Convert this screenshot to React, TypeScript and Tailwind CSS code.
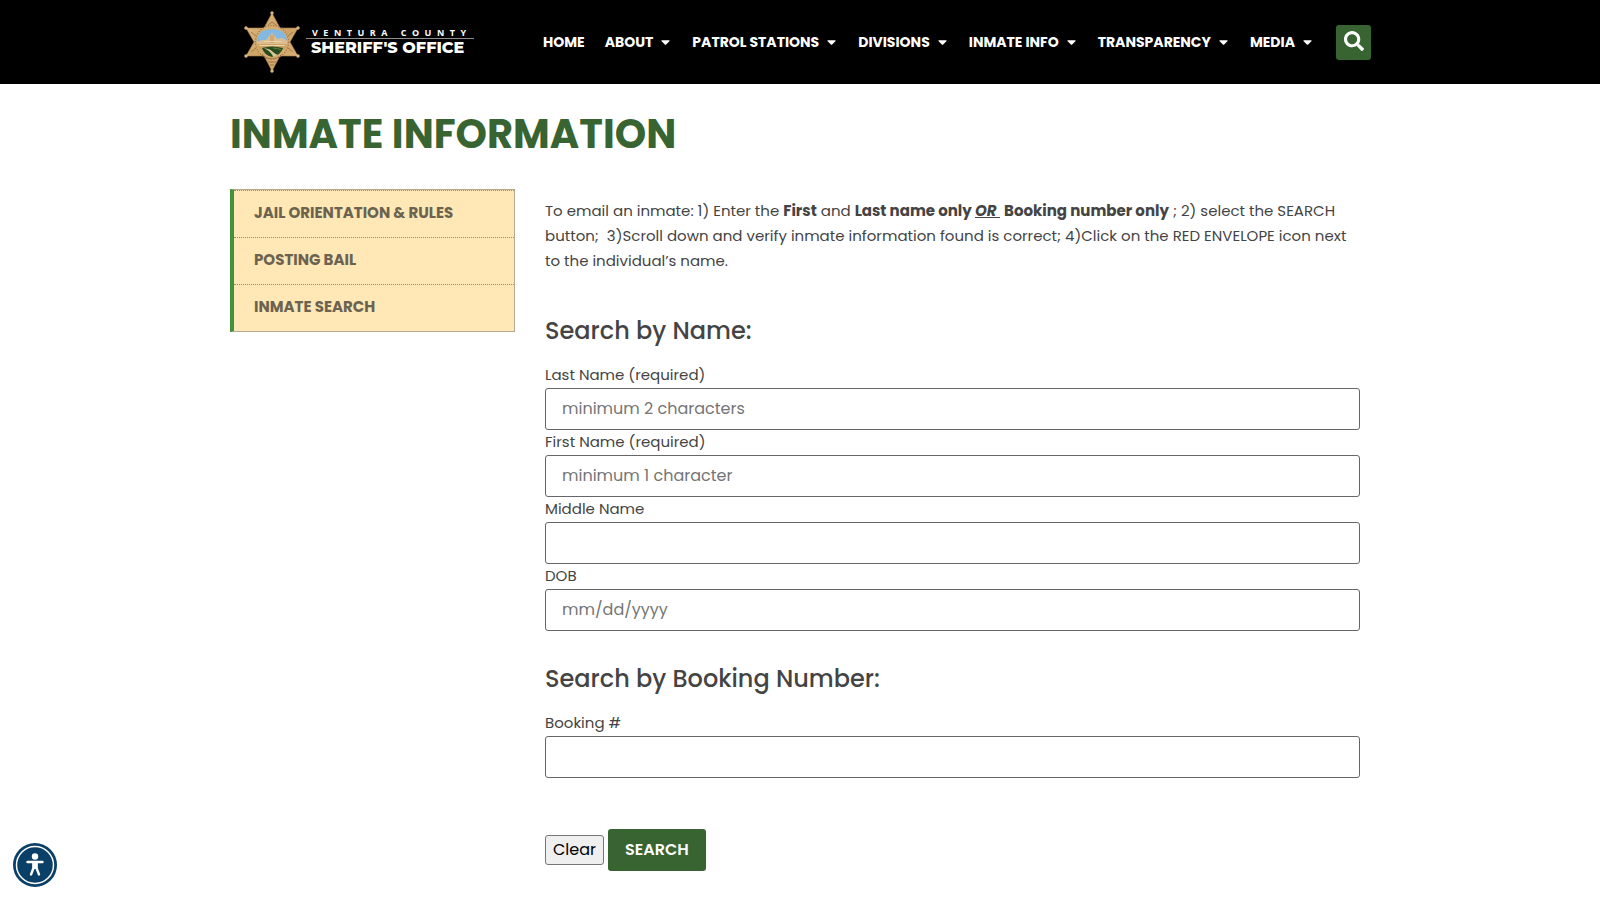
import { FaCaretDown, FaSearch } from "react-icons/fa";

const navItems = [
  { label: "HOME", menu: false },
  { label: "ABOUT", menu: true },
  { label: "PATROL STATIONS", menu: true },
  { label: "DIVISIONS", menu: true },
  { label: "INMATE INFO", menu: true },
  { label: "TRANSPARENCY", menu: true },
  { label: "MEDIA", menu: true },
];

const sideLinks = ["JAIL ORIENTATION & RULES", "POSTING BAIL", "INMATE SEARCH"];

const nameFields = [
  { id: "last-name", label: "Last Name (required)", placeholder: "minimum 2 characters" },
  { id: "first-name", label: "First Name (required)", placeholder: "minimum 1 character" },
  { id: "middle-name", label: "Middle Name", placeholder: "" },
  { id: "dob", label: "DOB", placeholder: "mm/dd/yyyy" },
];

const starTips = [
  [28, 3],
  [54, 18],
  [54, 46],
  [28, 61],
  [2, 46],
  [2, 18],
];

function SheriffStar() {
  return (
    <svg viewBox="0 0 56 64" className="h-16 w-14 shrink-0" aria-hidden="true">
      <defs>
        <linearGradient id="gold" x1="0" y1="0" x2="1" y2="1">
          <stop offset="0" stopColor="#e0bc84" />
          <stop offset="0.5" stopColor="#cda266" />
          <stop offset="1" stopColor="#dab37a" />
        </linearGradient>
        <clipPath id="seal">
          <circle cx="28" cy="32" r="15" />
        </clipPath>
      </defs>
      <path
        d="M28 3 L36 18 L54 18 L46 32 L54 46 L36 46 L28 61 L20 46 L2 46 L10 32 L2 18 L20 18 Z"
        fill="url(#gold)"
        stroke="#a87c48"
        strokeWidth="0.600"
      />
      <path
        d="M24 15 L28 12 L32 15 M7 22 L12 26 M49 22 L44 26 M7 42 L12 38 M49 42 L44 38 M24 52 H32 M26 55 H30"
        fill="none"
        stroke="#9a7040"
        strokeWidth="0.900"
      />
      {starTips.map(([x, y]) => (
        <circle key={`${x}-${y}`} cx={x} cy={y} r="1.700" fill="#d9b688" />
      ))}
      <circle
        cx="28"
        cy="32"
        r="16.500"
        fill="#d6ad70"
        stroke="#a1763f"
        strokeWidth="1.200"
        strokeDasharray="1.200 1.500"
      />
      <g clipPath="url(#seal)">
        <path d="M10 32 Q12 20 28 19 Q44 20 46 32 Z" fill="#82b8e2" />
        <path d="M12 32 L18 30 L22 30 L25 26 L28 23 L31 26 L33 29 L38 28 L44 31 V40 H12 Z" fill="#dcbd90" />
        <path d="M26 25 H30 V33 H26 Z" fill="#cda878" />
        <path d="M12 34 H44 V40 H12 Z" fill="#cca165" />
        <path d="M15 35 H41 V36 H15 Z M20 31 H37 V32 H20 Z" fill="#ead2a6" />
      </g>
      <path d="M18 38 Q28 35 39 38 Q37 45 28 47 Q20 45 18 38 Z" fill="#284a20" />
      <path d="M20 38 Q27 39 29 42 Q31 44 34 45 L29 47 Q28 42 20 38 Z" fill="#d8c997" />
      <path d="M29 38 Q34 38 37 40" fill="none" stroke="#5d8a42" strokeWidth="1" />
      <path d="M18 44 Q22 49 28 49 Q34 49 38 44" fill="none" stroke="#8c6434" strokeWidth="1" strokeDasharray="1.500 1" />
    </svg>
  );
}

function Logo() {
  return (
    <a href="#home" className="flex items-center gap-[6px]" aria-label="Ventura County Sheriff's Office">
      <SheriffStar />
      <svg viewBox="0 0 168 40" className="h-10 w-[168px]" aria-hidden="true">
        <text
          x="6"
          y="14"
          fill="#ffffff"
          fontFamily="Open Sans, sans-serif"
          fontSize="9"
          fontWeight="700"
          letterSpacing="5.500"
        >
          VENTURA COUNTY
        </text>
        <rect x="0" y="16" width="168" height="1" fill="#8d8d8d" />
        <text x="5" y="31" fill="#ffffff" fontFamily="Montserrat, Inter, sans-serif" fontSize="16" fontWeight="800">
          SHERIFF'S OFFICE
        </text>
      </svg>
    </a>
  );
}

function Header() {
  return (
    <header className="bg-black text-white">
      <div className="mx-auto flex h-[84px] max-w-[1142px] items-center justify-between pl-[15px]">
        <Logo />
        <div className="flex items-center gap-6">
          <nav aria-label="Main">
            <ul className="flex items-center text-[14px] leading-5 font-bold">
              {navItems.map((item, i) => (
                <li key={item.label} className={i === 0 ? "mr-5" : i < navItems.length - 1 ? "mr-[22px]" : ""}>
                  <a href="#menu" className="flex items-center gap-2 whitespace-nowrap">
                    {item.label}
                    {item.menu && <FaCaretDown className="h-[14px] w-[9px]" aria-hidden="true" />}
                  </a>
                </li>
              ))}
            </ul>
          </nav>
          <button
            type="button"
            aria-label="Search"
            className="flex size-[35px] items-center justify-center rounded-[3px] bg-[#386431]"
          >
            <FaSearch className="mb-[2px] size-5" aria-hidden="true" />
          </button>
        </div>
      </div>
    </header>
  );
}

function Field({ id, label, placeholder }: { id: string; label: string; placeholder?: string }) {
  return (
    <div className="flex flex-col gap-[2px]">
      <label htmlFor={id} className="leading-[23px]">
        {label}
      </label>
      <input
        id={id}
        type="text"
        placeholder={placeholder}
        className="h-[42px] w-full rounded-[3px] border border-[#666] bg-white px-4 pb-[2px] text-[16px] text-[#444] placeholder:text-[#757575]"
      />
    </div>
  );
}

function Sidebar() {
  return (
    <nav
      aria-label="Inmate information"
      className="w-[285px] shrink-0 border border-l-4 border-[#b5ab94] border-l-[#439139] bg-[#ffe8b5]"
    >
      <ul>
        {sideLinks.map((label) => (
          <li key={label} className="border-t border-dotted border-[#a08a5c]">
            <a href="#section" className="block px-5 pt-[10px] pb-3 text-[15px] leading-6 font-bold text-[#6b6250]">
              {label}
            </a>
          </li>
        ))}
      </ul>
    </nav>
  );
}

export default function App() {
  return (
    <div className="min-h-screen bg-white font-['Poppins','Inter',sans-serif] text-[15px] text-[#444]">
      <Header />
      <main className="mx-auto max-w-[1140px]">
        <h1 className="pt-[25px] text-[40px] leading-[50px] font-bold text-[#386431]">INMATE INFORMATION</h1>
        <div className="flex items-start gap-[30px] pt-[30px] pr-[10px]">
          <Sidebar />
          <div className="min-w-0 grow pt-[9px]">
            <p className="leading-[25px]">
              To email an inmate: 1) Enter the <strong>First</strong> and <strong>Last name only </strong>
              <strong>
                <em className="underline">OR&nbsp;</em>
              </strong>{" "}
              <strong>Booking number only</strong> ; 2) select the SEARCH button;&nbsp; 3)Scroll down and verify
              inmate information found is correct; 4)Click on the RED ENVELOPE icon next to the individual’s name.
            </p>
            <form>
              <h2 className="pt-[42px] pb-4 text-[24px] leading-8 font-medium">Search by Name:</h2>
              {nameFields.map((field) => (
                <Field key={field.id} {...field} />
              ))}
              <h2 className="pt-8 pb-4 text-[24px] leading-8 font-medium">Search by Booking Number:</h2>
              <Field id="booking" label="Booking #" />
              <div className="flex items-center gap-1 pt-[51px] pb-7">
                <button
                  type="reset"
                  className="h-[30px] rounded-[3px] border border-[#767676] bg-[#efefef] px-[7px] text-[16px] text-black"
                >
                  Clear
                </button>
                <button
                  type="submit"
                  className="h-[42px] rounded-[3px] bg-[#386431] px-[17px] text-[16px] font-semibold text-white"
                >
                  SEARCH
                </button>
              </div>
            </form>
          </div>
        </div>
      </main>
      <button
        type="button"
        aria-label="Accessibility menu"
        className="fixed bottom-[13px] left-[13px] size-11 rounded-full"
      >
        <svg viewBox="0 0 44 44" className="size-11" aria-hidden="true">
          <circle cx="22" cy="22" r="22" fill="#0a3f68" />
          <circle cx="22" cy="22" r="18.500" fill="none" stroke="#ffffff" strokeWidth="1.500" />
          <circle cx="22" cy="13.500" r="3.200" fill="#ffffff" />
          <path
            d="M14.500 19 H29.500 M20.500 20 V25 L18 31.500 M23.500 20 V25 L26 31.500"
            fill="none"
            stroke="#ffffff"
            strokeWidth="2.400"
            strokeLinecap="round"
            strokeLinejoin="round"
          />
          <path d="M19.500 19 H24.500 V26 H19.500 Z" fill="#ffffff" />
        </svg>
      </button>
    </div>
  );
}
